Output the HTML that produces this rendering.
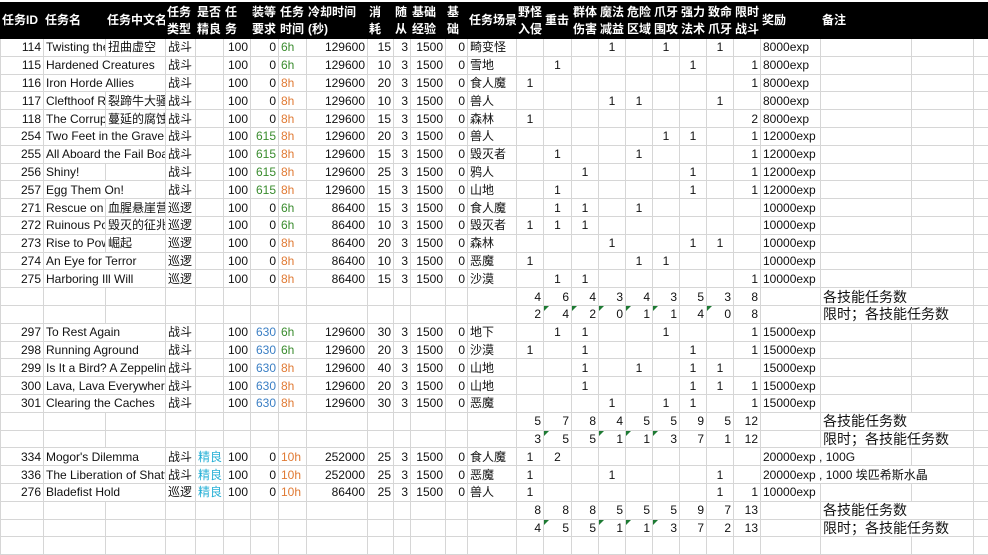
<!DOCTYPE html>
<html><head><meta charset="utf-8"><style>
body{margin:0;background:#fff;width:988px;height:545px;overflow:hidden;font-family:"Liberation Sans","Noto Sans CJK SC",sans-serif;font-size:12px;color:#111}
.top{height:2px}
table{border-collapse:collapse;table-layout:fixed;width:988px}
td{border:1px solid #d6d6d6;height:16.8px;padding:0 2px;white-space:nowrap;overflow:hidden;line-height:16px}
tr.h td{background:#000;color:#fff;font-weight:bold;height:35px;line-height:17px;border-color:#000;padding:0 1px;font-size:12px}
.r{text-align:right}.c{text-align:center}
.g{color:#3a8c2e}.or{color:#e07a34}.b{color:#3b7fc4}.cy{color:#27b0d6}
.lab{font-size:14px;overflow:visible}
.t{position:relative}
.t::before{content:"";position:absolute;left:0;top:0;border-top:5px solid #1d7a33;border-right:5px solid transparent}
</style></head><body><div class="top"></div>
<table>
<colgroup><col style="width:43px"><col style="width:62px"><col style="width:60px"><col style="width:30px"><col style="width:28px"><col style="width:27px"><col style="width:28px"><col style="width:28px"><col style="width:61px"><col style="width:26px"><col style="width:17px"><col style="width:35px"><col style="width:22px"><col style="width:49px"><col style="width:27px"><col style="width:28px"><col style="width:27px"><col style="width:27px"><col style="width:27px"><col style="width:27px"><col style="width:27px"><col style="width:27px"><col style="width:27px"><col style="width:60px"><col style="width:91px"><col style="width:62px"><col style="width:15px"></colgroup>
<tr class="h"><td>任务ID</td><td>任务名</td><td>任务中文名</td><td>任务<br>类型</td><td>是否<br>精良</td><td>任<br>务</td><td>装等<br>要求</td><td>任务<br>时间</td><td>冷却时间<br>(秒)</td><td>消<br>耗</td><td>随<br>从</td><td>基础<br>经验</td><td>基<br>础</td><td>任务场景</td><td>野怪<br>入侵</td><td>重击</td><td>群体<br>伤害</td><td>魔法<br>减益</td><td>危险<br>区域</td><td>爪牙<br>围攻</td><td>强力<br>法术</td><td>致命<br>爪牙</td><td>限时<br>战斗</td><td>奖励</td><td>备注</td><td></td><td></td></tr>
<tr><td class="r">114</td><td>Twisting the</td><td>扭曲虚空</td><td>战斗</td><td></td><td class="r">100</td><td class="r">0</td><td class="g">6h</td><td class="r">129600</td><td class="r">15</td><td class="r">3</td><td class="r">1500</td><td class="r">0</td><td>畸变怪</td><td></td><td></td><td></td><td class="c">1</td><td></td><td class="c">1</td><td></td><td class="c">1</td><td></td><td>8000exp</td><td></td><td></td><td></td></tr>
<tr><td class="r">115</td><td colspan="2">Hardened Creatures</td><td>战斗</td><td></td><td class="r">100</td><td class="r">0</td><td class="g">6h</td><td class="r">129600</td><td class="r">10</td><td class="r">3</td><td class="r">1500</td><td class="r">0</td><td>雪地</td><td></td><td class="c">1</td><td></td><td></td><td></td><td></td><td class="c">1</td><td></td><td class="r">1</td><td>8000exp</td><td></td><td></td><td></td></tr>
<tr><td class="r">116</td><td colspan="2">Iron Horde Allies</td><td>战斗</td><td></td><td class="r">100</td><td class="r">0</td><td class="or">8h</td><td class="r">129600</td><td class="r">20</td><td class="r">3</td><td class="r">1500</td><td class="r">0</td><td>食人魔</td><td class="c">1</td><td></td><td></td><td></td><td></td><td></td><td></td><td></td><td class="r">1</td><td>8000exp</td><td></td><td></td><td></td></tr>
<tr><td class="r">117</td><td>Clefthoof R</td><td>裂蹄牛大骚乱</td><td>战斗</td><td></td><td class="r">100</td><td class="r">0</td><td class="or">8h</td><td class="r">129600</td><td class="r">10</td><td class="r">3</td><td class="r">1500</td><td class="r">0</td><td>兽人</td><td></td><td></td><td></td><td class="c">1</td><td class="c">1</td><td></td><td></td><td class="c">1</td><td></td><td>8000exp</td><td></td><td></td><td></td></tr>
<tr><td class="r">118</td><td>The Corrup</td><td>蔓延的腐蚀</td><td>战斗</td><td></td><td class="r">100</td><td class="r">0</td><td class="or">8h</td><td class="r">129600</td><td class="r">15</td><td class="r">3</td><td class="r">1500</td><td class="r">0</td><td>森林</td><td class="c">1</td><td></td><td></td><td></td><td></td><td></td><td></td><td></td><td class="r">2</td><td>8000exp</td><td></td><td></td><td></td></tr>
<tr><td class="r">254</td><td colspan="2">Two Feet in the Grave</td><td>战斗</td><td></td><td class="r">100</td><td class="r g">615</td><td class="or">8h</td><td class="r">129600</td><td class="r">20</td><td class="r">3</td><td class="r">1500</td><td class="r">0</td><td>兽人</td><td></td><td></td><td></td><td></td><td></td><td class="c">1</td><td class="c">1</td><td></td><td class="r">1</td><td>12000exp</td><td></td><td></td><td></td></tr>
<tr><td class="r">255</td><td colspan="2">All Aboard the Fail Boat</td><td>战斗</td><td></td><td class="r">100</td><td class="r g">615</td><td class="or">8h</td><td class="r">129600</td><td class="r">15</td><td class="r">3</td><td class="r">1500</td><td class="r">0</td><td>毁灭者</td><td></td><td class="c">1</td><td></td><td></td><td class="c">1</td><td></td><td></td><td></td><td class="r">1</td><td>12000exp</td><td></td><td></td><td></td></tr>
<tr><td class="r">256</td><td>Shiny!</td><td></td><td>战斗</td><td></td><td class="r">100</td><td class="r g">615</td><td class="or">8h</td><td class="r">129600</td><td class="r">25</td><td class="r">3</td><td class="r">1500</td><td class="r">0</td><td>鸦人</td><td></td><td></td><td class="c">1</td><td></td><td></td><td></td><td class="c">1</td><td></td><td class="r">1</td><td>12000exp</td><td></td><td></td><td></td></tr>
<tr><td class="r">257</td><td colspan="2">Egg Them On!</td><td>战斗</td><td></td><td class="r">100</td><td class="r g">615</td><td class="or">8h</td><td class="r">129600</td><td class="r">15</td><td class="r">3</td><td class="r">1500</td><td class="r">0</td><td>山地</td><td></td><td class="c">1</td><td></td><td></td><td></td><td></td><td class="c">1</td><td></td><td class="r">1</td><td>12000exp</td><td></td><td></td><td></td></tr>
<tr><td class="r">271</td><td>Rescue on t</td><td>血腥悬崖营救</td><td>巡逻</td><td></td><td class="r">100</td><td class="r">0</td><td class="g">6h</td><td class="r">86400</td><td class="r">15</td><td class="r">3</td><td class="r">1500</td><td class="r">0</td><td>食人魔</td><td></td><td class="c">1</td><td class="c">1</td><td></td><td class="c">1</td><td></td><td></td><td></td><td></td><td>10000exp</td><td></td><td></td><td></td></tr>
<tr><td class="r">272</td><td>Ruinous Po</td><td>毁灭的征兆</td><td>巡逻</td><td></td><td class="r">100</td><td class="r">0</td><td class="g">6h</td><td class="r">86400</td><td class="r">10</td><td class="r">3</td><td class="r">1500</td><td class="r">0</td><td>毁灭者</td><td class="c">1</td><td class="c">1</td><td class="c">1</td><td></td><td></td><td></td><td></td><td></td><td></td><td>10000exp</td><td></td><td></td><td></td></tr>
<tr><td class="r">273</td><td>Rise to Pow</td><td>崛起</td><td>巡逻</td><td></td><td class="r">100</td><td class="r">0</td><td class="or">8h</td><td class="r">86400</td><td class="r">20</td><td class="r">3</td><td class="r">1500</td><td class="r">0</td><td>森林</td><td></td><td></td><td></td><td class="c">1</td><td></td><td></td><td class="c">1</td><td class="c">1</td><td></td><td>10000exp</td><td></td><td></td><td></td></tr>
<tr><td class="r">274</td><td colspan="2">An Eye for Terror</td><td>巡逻</td><td></td><td class="r">100</td><td class="r">0</td><td class="or">8h</td><td class="r">86400</td><td class="r">10</td><td class="r">3</td><td class="r">1500</td><td class="r">0</td><td>恶魔</td><td class="c">1</td><td></td><td></td><td></td><td class="c">1</td><td class="c">1</td><td></td><td></td><td></td><td>10000exp</td><td></td><td></td><td></td></tr>
<tr><td class="r">275</td><td colspan="2">Harboring Ill Will</td><td>巡逻</td><td></td><td class="r">100</td><td class="r">0</td><td class="or">8h</td><td class="r">86400</td><td class="r">15</td><td class="r">3</td><td class="r">1500</td><td class="r">0</td><td>沙漠</td><td></td><td class="c">1</td><td class="c">1</td><td></td><td></td><td></td><td></td><td></td><td class="r">1</td><td>10000exp</td><td></td><td></td><td></td></tr>
<tr><td></td><td></td><td></td><td></td><td></td><td></td><td></td><td></td><td></td><td></td><td></td><td></td><td></td><td></td><td class="r">4</td><td class="r">6</td><td class="r">4</td><td class="r">3</td><td class="r">4</td><td class="r">3</td><td class="r">5</td><td class="r">3</td><td class="r">8</td><td></td><td class="lab" colspan="2">各技能任务数</td><td></td></tr>
<tr><td></td><td></td><td></td><td></td><td></td><td></td><td></td><td></td><td></td><td></td><td></td><td></td><td></td><td></td><td class="r">2</td><td class="r t">4</td><td class="r t">2</td><td class="r t">0</td><td class="r t">1</td><td class="r t">1</td><td class="r">4</td><td class="r t">0</td><td class="r">8</td><td></td><td class="lab" colspan="2">限时；各技能任务数</td><td></td></tr>
<tr><td class="r">297</td><td colspan="2">To Rest Again</td><td>战斗</td><td></td><td class="r">100</td><td class="r b">630</td><td class="g">6h</td><td class="r">129600</td><td class="r">30</td><td class="r">3</td><td class="r">1500</td><td class="r">0</td><td>地下</td><td></td><td class="c">1</td><td class="c">1</td><td></td><td></td><td class="c">1</td><td></td><td></td><td class="r">1</td><td>15000exp</td><td></td><td></td><td></td></tr>
<tr><td class="r">298</td><td colspan="2">Running Aground</td><td>战斗</td><td></td><td class="r">100</td><td class="r b">630</td><td class="g">6h</td><td class="r">129600</td><td class="r">20</td><td class="r">3</td><td class="r">1500</td><td class="r">0</td><td>沙漠</td><td class="c">1</td><td></td><td class="c">1</td><td></td><td></td><td></td><td class="c">1</td><td></td><td class="r">1</td><td>15000exp</td><td></td><td></td><td></td></tr>
<tr><td class="r">299</td><td colspan="2">Is It a Bird? A Zeppelin?</td><td>战斗</td><td></td><td class="r">100</td><td class="r b">630</td><td class="or">8h</td><td class="r">129600</td><td class="r">40</td><td class="r">3</td><td class="r">1500</td><td class="r">0</td><td>山地</td><td></td><td></td><td class="c">1</td><td></td><td class="c">1</td><td></td><td class="c">1</td><td class="c">1</td><td></td><td>15000exp</td><td></td><td></td><td></td></tr>
<tr><td class="r">300</td><td colspan="2">Lava, Lava Everywhere</td><td>战斗</td><td></td><td class="r">100</td><td class="r b">630</td><td class="or">8h</td><td class="r">129600</td><td class="r">20</td><td class="r">3</td><td class="r">1500</td><td class="r">0</td><td>山地</td><td></td><td></td><td class="c">1</td><td></td><td></td><td></td><td class="c">1</td><td class="c">1</td><td class="r">1</td><td>15000exp</td><td></td><td></td><td></td></tr>
<tr><td class="r">301</td><td colspan="2">Clearing the Caches</td><td>战斗</td><td></td><td class="r">100</td><td class="r b">630</td><td class="or">8h</td><td class="r">129600</td><td class="r">30</td><td class="r">3</td><td class="r">1500</td><td class="r">0</td><td>恶魔</td><td></td><td></td><td></td><td class="c">1</td><td></td><td class="c">1</td><td class="c">1</td><td></td><td class="r">1</td><td>15000exp</td><td></td><td></td><td></td></tr>
<tr><td></td><td></td><td></td><td></td><td></td><td></td><td></td><td></td><td></td><td></td><td></td><td></td><td></td><td></td><td class="r">5</td><td class="r">7</td><td class="r">8</td><td class="r">4</td><td class="r">5</td><td class="r">5</td><td class="r">9</td><td class="r">5</td><td class="r">12</td><td></td><td class="lab" colspan="2">各技能任务数</td><td></td></tr>
<tr><td></td><td></td><td></td><td></td><td></td><td></td><td></td><td></td><td></td><td></td><td></td><td></td><td></td><td></td><td class="r">3</td><td class="r t">5</td><td class="r">5</td><td class="r t">1</td><td class="r t">1</td><td class="r t">3</td><td class="r">7</td><td class="r">1</td><td class="r">12</td><td></td><td class="lab" colspan="2">限时；各技能任务数</td><td></td></tr>
<tr><td class="r">334</td><td colspan="2">Mogor's Dilemma</td><td>战斗</td><td class="cy">精良</td><td class="r">100</td><td class="r">0</td><td class="or">10h</td><td class="r">252000</td><td class="r">25</td><td class="r">3</td><td class="r">1500</td><td class="r">0</td><td>食人魔</td><td class="c">1</td><td class="c">2</td><td></td><td></td><td></td><td></td><td></td><td></td><td></td><td colspan="2">20000exp , 100G</td><td></td><td></td></tr>
<tr><td class="r">336</td><td colspan="2">The Liberation of Shatt</td><td>战斗</td><td class="cy">精良</td><td class="r">100</td><td class="r">0</td><td class="or">10h</td><td class="r">252000</td><td class="r">25</td><td class="r">3</td><td class="r">1500</td><td class="r">0</td><td>恶魔</td><td class="c">1</td><td></td><td></td><td class="c">1</td><td></td><td></td><td></td><td class="c">1</td><td></td><td colspan="3">20000exp , 1000 埃匹希斯水晶</td><td></td></tr>
<tr><td class="r">276</td><td colspan="2">Bladefist Hold</td><td>巡逻</td><td class="cy">精良</td><td class="r">100</td><td class="r">0</td><td class="or">10h</td><td class="r">86400</td><td class="r">25</td><td class="r">3</td><td class="r">1500</td><td class="r">0</td><td>兽人</td><td class="c">1</td><td></td><td></td><td></td><td></td><td></td><td></td><td class="c">1</td><td class="r">1</td><td>10000exp</td><td></td><td></td><td></td></tr>
<tr><td></td><td></td><td></td><td></td><td></td><td></td><td></td><td></td><td></td><td></td><td></td><td></td><td></td><td></td><td class="r">8</td><td class="r">8</td><td class="r">8</td><td class="r">5</td><td class="r">5</td><td class="r">5</td><td class="r">9</td><td class="r">7</td><td class="r">13</td><td></td><td class="lab" colspan="2">各技能任务数</td><td></td></tr>
<tr><td></td><td></td><td></td><td></td><td></td><td></td><td></td><td></td><td></td><td></td><td></td><td></td><td></td><td></td><td class="r">4</td><td class="r t">5</td><td class="r">5</td><td class="r t">1</td><td class="r t">1</td><td class="r t">3</td><td class="r">7</td><td class="r">2</td><td class="r">13</td><td></td><td class="lab" colspan="2">限时；各技能任务数</td><td></td></tr>
<tr><td></td><td></td><td></td><td></td><td></td><td></td><td></td><td></td><td></td><td></td><td></td><td></td><td></td><td></td><td></td><td></td><td></td><td></td><td></td><td></td><td></td><td></td><td></td><td></td><td></td><td></td><td></td></tr>
</table>
</body></html>
